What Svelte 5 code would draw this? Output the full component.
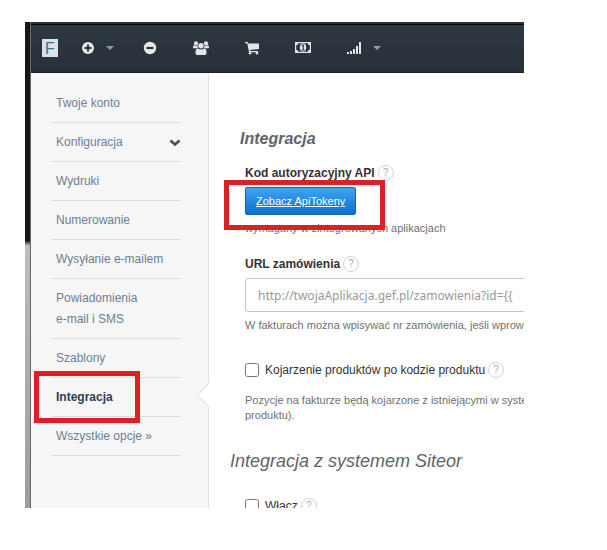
<script>
  const menu = [
    { label: 'Twoje konto' },
    { label: 'Konfiguracja', expandable: true },
    { label: 'Wydruki' },
    { label: 'Numerowanie' },
    { label: 'Wysyłanie e-mailem' },
    { label: 'Powiadomienia\ne-mail i SMS' },
    { label: 'Szablony' },
    { label: 'Integracja', active: true },
    { label: 'Wszystkie opcje »' },
  ];

  let apiUrl = $state('');
  let matchByCode = $state(false);
  let siteorEnabled = $state(false);
</script>

{#snippet caret()}
  <svg class="caret" width="8" height="4" viewBox="0 0 8 4" aria-hidden="true">
    <path d="M0 0h8L4 4z" fill="#969ca2" />
  </svg>
{/snippet}

{#snippet help()}
  <button class="help" type="button" aria-label="Pomoc">?</button>
{/snippet}

<div class="page">
  <div class="edge"></div>
  <div class="app">
    <header>
      <a class="logo" href="#start">F</a>
      <button class="item dropdown" type="button" aria-label="Przychody">
        <svg width="14" height="14" viewBox="0 0 14 14">
          <circle cx="7" cy="7" r="6" fill="#e9eaeb" />
          <path d="M7 3.5v7M3.5 7h7" stroke="#2b343e" stroke-width="2" />
        </svg>
        {@render caret()}
      </button>
      <button class="item" type="button" aria-label="Wydatki">
        <svg width="14" height="14" viewBox="0 0 14 14">
          <circle cx="7" cy="7" r="6.2" fill="#e9eaeb" />
          <path d="M3.5 7h7" stroke="#2b343e" stroke-width="2.2" />
        </svg>
      </button>
      <button class="item" type="button" aria-label="Klienci">
        <svg width="16" height="14" viewBox="0 0 16 14" fill="#e4e5e6">
          <circle cx="3" cy="2.4" r="2.1" />
          <circle cx="13" cy="2.4" r="2.1" />
          <path d="M0 7.3V6.2Q0 4.2 1.2 4.2Q3 5.2 4.6 4.5Q4.5 6 5 7.3zM16 7.3V6.2Q16 4.2 14.8 4.2Q13 5.2 11.4 4.5Q11.5 6 11 7.3z" />
          <circle cx="8" cy="4.7" r="2.7" />
          <path d="M2.5 12V11Q2.5 7.4 4.8 7.4Q8 9.4 11.2 7.4Q13.5 7.4 13.5 11V12Q13.5 14 11.7 14H4.3Q2.5 14 2.5 12z" />
        </svg>
      </button>
      <button class="item" type="button" aria-label="Produkty">
        <svg width="14" height="14" viewBox="0 0 14 14" fill="#e4e5e6">
          <path d="M0 1h2.9l.4 1.4H14V8L5 9.100l.2.9H13v1.200H4.100L2.200 2.200H0z" />
          <circle cx="5" cy="12.2" r="1.3" />
          <circle cx="12" cy="12.2" r="1.3" />
        </svg>
      </button>
      <button class="item" type="button" aria-label="Płatności">
        <svg width="16" height="12" viewBox="0 0 16 12">
          <path d="M0 0h16v11H0z" fill="#e4e5e6" />
          <path d="M3.2 1.3h9.6a2 2 0 0 0 2 2v4.400a2 2 0 0 0-2 2H3.200a2 2 0 0 0-2-2V3.300a2 2 0 0 0 2-2z" fill="#2b343e" />
          <ellipse cx="8" cy="5.5" rx="3.2" ry="4" fill="#e4e5e6" />
          <path d="M6.7 4l1.500-1v4.800M6.500 8h3.200" fill="none" stroke="#2b343e" stroke-width="1.1" />
        </svg>
      </button>
      <button class="item dropdown" type="button" aria-label="Raporty">
        <svg width="15" height="12" viewBox="0 0 15 12" fill="#e4e5e6">
          <path d="M0 10h2v2H0zM3 9h2v3H3zM6 7h2v5H6zM9 4h2v8H9zM12 0h2v12h-2z" />
        </svg>
        {@render caret()}
      </button>
    </header>

    <div class="body">
      <nav>
        <ul>
          {#each menu as entry}
            <li class:active={entry.active}>
              <a href="#menu">{entry.label}</a>
              {#if entry.expandable}
                <svg width="12" height="8" viewBox="0 0 12 8" aria-hidden="true">
                  <path d="M1.5 1.5L6 5.5l4.5-4" fill="none" stroke="#4c4f53" stroke-width="2.6" />
                </svg>
              {/if}
              {#if entry.active}
                <svg class="notch" width="13" height="24" viewBox="0 0 13 24" aria-hidden="true">
                  <path d="M13 0h-.5v.5L1.5 12l11 11.500v.5h.5z" fill="#fff" />
                  <path d="M12.5 .5L1.5 12l11 11.5" fill="none" stroke="#d5dade" />
                </svg>
                <span class="marker"></span>
              {/if}
            </li>
          {/each}
        </ul>
      </nav>

      <main>
        <h2>Integracja</h2>
        <section class="field">
          <div class="title"><strong>Kod autoryzacyjny API</strong>{@render help()}</div>
          <div class="action">
            <button class="primary" type="button">Zobacz ApiTokeny</button>
            <span class="marker"></span>
          </div>
          <p>wymagany w zintegrowanych aplikacjach</p>
        </section>

        <section class="field">
          <div class="title"><label for="order-url">URL zamówienia</label>{@render help()}</div>
          <input
            id="order-url"
            type="text"
            placeholder={'http://twojaAplikacja.gef.pl/zamowienia?id={{'}
            bind:value={apiUrl}
          />
          <p>W fakturach można wpisywać nr zamówienia, jeśli wprowa</p>
        </section>

        <section class="field option">
          <div class="check">
            <input id="match-code" type="checkbox" bind:checked={matchByCode} />
            <label for="match-code">Kojarzenie produktów po kodzie produktu</label>
            {@render help()}
          </div>
          <p>Pozycje na fakturze będą kojarzone z istniejącymi w system<br />produktu).</p>
        </section>

        <h3>Integracja z systemem Siteor</h3>
        <section class="field">
          <div class="check">
            <input id="siteor" type="checkbox" bind:checked={siteorEnabled} />
            <label for="siteor">Włącz</label>
            {@render help()}
          </div>
        </section>
      </main>
    </div>
  </div>
</div>

<style>
  :global(body) {
    margin: 0;
    background: #fff;
  }

  .page {
    box-sizing: border-box;
    display: flex;
    height: 100vh;
    padding: 22px 83px 42px 25px;
    font: 12px/20px "Liberation Sans", Arial, sans-serif;
    color: #333;
  }

  button {
    padding: 0;
    border: 0;
    background: none;
    font-family: inherit;
    cursor: pointer;
  }

  .edge {
    flex: 0 0 5px;
    border-right: 1px solid #686868;
    background: linear-gradient(#161718 0 45%, #bcbcbc 46%, #9c9c9c);
  }

  .app {
    display: flex;
    flex: 1;
    flex-direction: column;
    min-width: 0;
    overflow: hidden;
  }

  header {
    display: flex;
    flex: none;
    align-items: center;
    box-sizing: border-box;
    height: 51px;
    padding-left: 11px;
    border-top: 2px solid #29323b;
    border-bottom: 1px solid #1d232b;
    background: linear-gradient(#2d3841, #29303a);
    box-shadow: inset 0 1px #050709;
  }

  .logo {
    width: 16px;
    height: 18px;
    background: #dce1e5;
    color: #397391;
    font-size: 16px;
    line-height: 19px;
    text-align: center;
    text-decoration: none;
  }

  .item {
    display: flex;
    align-items: center;
    margin-left: 36px;
  }

  .logo + .item {
    margin-left: 23px;
  }

  .dropdown {
    gap: 11px;
  }

  .dropdown + .item {
    margin-left: 29px;
  }

  .body {
    display: flex;
    flex: 1;
    min-height: 0;
  }

  nav {
    flex: 0 0 130px;
    padding: 11px 27px 0 20px;
    border-right: 1px solid #dfe2e4;
    background: #f6f6f6;
  }

  ul {
    margin: 0;
    padding: 0;
    list-style: none;
  }

  li {
    position: relative;
    display: flex;
    align-items: center;
    justify-content: space-between;
    padding: 9px 0 8px 5px;
    border-bottom: 1px solid #d9dcde;
    line-height: 21px;
    white-space: pre-line;
  }

  li a {
    color: #6d7f94;
    text-decoration: none;
  }

  .active a {
    color: #2f4056;
    font-weight: bold;
  }

  .notch {
    position: absolute;
    top: 5px;
    right: -28px;
  }

  .marker {
    position: absolute;
    z-index: 1;
    box-sizing: border-box;
    border: 5px solid #dd1f26;
    pointer-events: none;
  }

  li .marker {
    inset: -7px 41px -7px -17px;
  }

  main {
    flex: 1;
    min-width: 0;
    padding: 56px 0 0 36px;
    white-space: nowrap;
  }

  h2,
  h3 {
    margin: 0;
    color: #606468;
    font-style: italic;
  }

  h2 {
    margin: 0 0 14px -5px;
    font-size: 16px;
    line-height: 20px;
  }

  h3 {
    margin: 26px 0 23px -15px;
    font-size: 18px;
    font-weight: normal;
    line-height: 24px;
  }

  .title,
  .check {
    display: flex;
    align-items: center;
  }

  .title {
    gap: 3px;
    margin-bottom: 4px;
    font-weight: bold;
  }

  .help {
    box-sizing: border-box;
    width: 16px;
    height: 16px;
    border: 1px solid #d3d3d3;
    border-radius: 50%;
    color: #aaa;
    font-size: 10px;
    line-height: 14px;
  }

  .field + .field {
    margin-top: 18px;
  }

  .field + .option {
    margin-top: 27px;
  }

  .action {
    position: relative;
    width: max-content;
  }

  .action .marker {
    inset: -7px -29px -15px -21px;
  }

  .primary {
    display: block;
    box-sizing: border-box;
    height: 28px;
    padding: 0 10px;
    border: 1px solid #1766ae;
    border-radius: 2px;
    background: linear-gradient(#41a5f0, #0b70cf);
    color: #fff;
    font-size: 11px;
    text-decoration: underline;
  }

  p {
    margin: 6px 0 0;
    color: #707070;
    font-size: 11px;
    line-height: 15px;
  }

  .option p {
    margin-top: 13px;
  }

  input[type='text'] {
    display: block;
    box-sizing: border-box;
    width: calc(100% + 20px);
    height: 34px;
    padding: 0 12px;
    border: 1px solid #c4c4c4;
    border-radius: 3px;
    font: 12px "Noto Sans", sans-serif;
  }

  input::placeholder {
    color: #999;
  }

  input[type='checkbox'] {
    width: 14px;
    height: 14px;
    margin: 0 6px 0 0;
  }

  .check .help {
    margin-left: 3px;
  }
</style>
